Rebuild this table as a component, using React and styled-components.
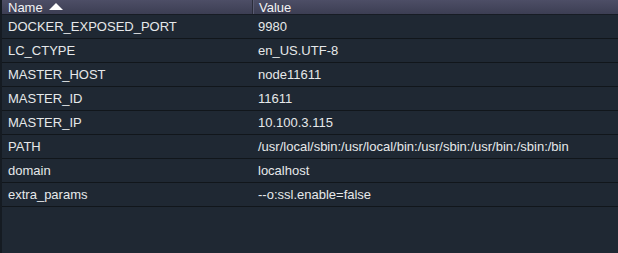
import React from 'react'
import styled, { createGlobalStyle } from 'styled-components'

const rows = [
  ['DOCKER_EXPOSED_PORT', '9980'],
  ['LC_CTYPE', 'en_US.UTF-8'],
  ['MASTER_HOST', 'node11611'],
  ['MASTER_ID', '11611'],
  ['MASTER_IP', '10.100.3.115'],
  ['PATH', '/usr/local/sbin:/usr/local/bin:/usr/sbin:/usr/bin:/sbin:/bin'],
  ['domain', 'localhost'],
  ['extra_params', '--o:ssl.enable=false'],
]

function App() {
  return (
    <>
      <GlobalStyle />
      <Grid>
        <Header>
          <HeadCell>
            Name <SortArrow />
          </HeadCell>
          <HeadCell $divider>Value</HeadCell>
        </Header>
        <Body>
          {rows.map(([name, value]) => (
            <Row key={name}>
              <Cell>{name}</Cell>
              <Cell $value>{value}</Cell>
            </Row>
          ))}
        </Body>
      </Grid>
    </>
  )
}

export default App

const SortArrow = () => (
  <Arrow width="14" height="7" viewBox="0 0 14 7">
    <path d="M0 7 L7 0 L14 7 Z" fill="#ffffff" />
  </Arrow>
)

const GlobalStyle = createGlobalStyle`
  html, body {
    margin: 0;
    padding: 0;
    background: #1f2833;
    overflow: hidden;
  }
  body {
    font-family: "Liberation Sans", Arial, sans-serif;
    font-size: 13px;
    color: #e6e8ea;
  }
`

const Grid = styled.div`
  width: 618px;
  height: 253px;
  display: flex;
  flex-direction: column;
  background: #1f2833;
  border-left: 2px solid #151b22;
  box-sizing: border-box;
  overflow: hidden;
`

const Header = styled.div`
  flex: none;
  height: 14px;
  display: grid;
  grid-template-columns: 250px 1fr;
  background: linear-gradient(#4d4e66, #3c3e53);
  border-bottom: 1px solid #171c24;
  overflow: hidden;
`

const HeadCell = styled.div`
  display: flex;
  align-items: flex-end;
  gap: 6px;
  padding-left: 6px;
  line-height: 13px;
  margin-top: -6px;
  color: #f2f2f4;
  font-size: 13px;
  border-left: ${(p) => (p.$divider ? '1px solid #2b2d3b' : 'none')};
  box-shadow: ${(p) => (p.$divider ? 'inset 1px 0 0 #5a5c73' : 'none')};
  white-space: nowrap;
`

const Arrow = styled.svg`
  display: block;
  margin-bottom: 4px;
`

const Body = styled.div`
  display: flex;
  flex-direction: column;
`

const Row = styled.div`
  display: grid;
  grid-template-columns: 250px 1fr;
  height: 24px;
  box-sizing: border-box;
  border-bottom: 1px solid #11161b;
`

const Cell = styled.div`
  display: flex;
  align-items: center;
  padding-left: 6px;
  white-space: nowrap;
  overflow: hidden;
`
